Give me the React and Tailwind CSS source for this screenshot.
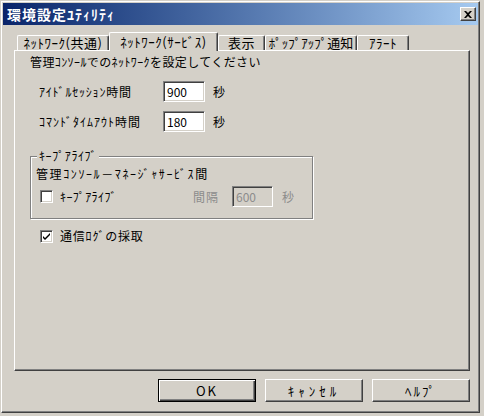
import React from 'react';

const font = "font-['Noto_Sans_CJK_JP','Noto_Sans',sans-serif]";
const raised = 'border border-t-white border-l-white border-r-[#404040] border-b-[#404040] shadow-[inset_-1px_-1px_0_#808080]';
const sunken = 'border border-t-[#808080] border-l-[#808080] border-r-white border-b-white shadow-[inset_1px_1px_0_#404040,inset_-1px_-1px_0_#d4d0c8]';

const Tab = ({ label, width, active, tight }) => (
  <div
    className={`${width} flex items-center justify-center border-l border-t border-r border-l-white border-t-white border-r-[#404040] shadow-[inset_-1px_0_0_#808080] rounded-t-[2px] bg-[#d4d0c8] text-[13px] whitespace-nowrap ${
      tight ? '' : 'tracking-[0.5px]'
    } ${active ? 'h-[19px] relative z-10 -mb-px' : 'h-[15px]'}`}
  >
    {label}
  </div>
);

const TextBox = ({ value, disabled, width = 'w-[42px]' }) => (
  <div className={`${width} h-[21px] ${sunken} ${disabled ? 'bg-[#d4d0c8] text-[#8c8c8c]' : 'bg-white'} flex items-center pl-[3px]`}>
    {value}
  </div>
);

const Check = ({ checked }) => (
  <div className={`w-[13px] h-[13px] ${sunken} bg-white flex items-center justify-center`}>
    {checked && (
      <svg width="7" height="7" viewBox="0 0 7 7">
        <path d="M0 3 L2 5 L7 0 L7 2 L2 7 L0 5 Z" fill="black" />
      </svg>
    )}
  </div>
);

const Button = ({ label, isDefault, spacing }) => (
  <div
    className={`w-[98px] h-[23px] flex items-center justify-center text-[13px] ${spacing} ${
      isDefault
        ? 'border border-black shadow-[inset_1px_1px_0_white,inset_-1px_-1px_0_#404040,inset_-2px_-2px_0_#808080]'
        : raised
    }`}
  >
    {label}
  </div>
);

export default function App() {
  return (
    <div className={`w-[484px] h-[416px] bg-[#d4d0c8] pt-px pl-px text-[12px] leading-[14px] text-black ${font}`}>
      <div className={`w-[479px] h-[412px] ${raised} p-px flex flex-col`}>
        <div className="h-[22px] bg-gradient-to-r from-[#0a246a] to-[#a6caf0] flex items-center justify-between pl-[4px] pr-[2px]">
          <span className="text-white font-bold text-[14px] tracking-[1px]">環境設定ﾕﾃｨﾘﾃｨ</span>
          <div className={`w-[16px] h-[14px] bg-[#d4d0c8] ${raised} flex items-center justify-center`}>
            <svg width="8" height="7" viewBox="0 0 8 7">
              <path d="M0 0 L2 0 L4 2 L6 0 L8 0 L5 3.5 L8 7 L6 7 L4 5 L2 7 L0 7 L3 3.5 Z" fill="black" />
            </svg>
          </div>
        </div>

        <div className="ml-[11px] w-[456px] mt-[7px] flex flex-col">
          <div className="flex items-end pl-[3px] h-[18px]">
            <Tab label="ﾈｯﾄﾜｰｸ(共通)" width="w-[92px]" />
            <Tab label="ﾈｯﾄﾜｰｸ(ｻｰﾋﾞｽ)" width="w-[109px]" active />
            <Tab label="表示" width="w-[47px]" />
            <Tab label="ﾎﾟｯﾌﾟｱｯﾌﾟ通知" width="w-[92px]" tight />
            <Tab label="ｱﾗｰﾄ" width="w-[52px]" />
          </div>

          <div className={`h-[321px] ${raised} flex flex-col`}>
            <div className="mt-[4px] pl-[15px] tracking-[0.4px]">管理ｺﾝｿｰﾙでのﾈｯﾄﾜｰｸを設定してください</div>

            <div className="mt-[12px] pl-[24px] flex items-center h-[21px]">
              <span className="w-[124px] tracking-[0.8px]">ｱｲﾄﾞﾙｾｯｼｮﾝ時間</span>
              <TextBox value="900" />
              <span className="ml-[8px]">秒</span>
            </div>
            <div className="mt-[9px] pl-[24px] flex items-center h-[21px]">
              <span className="w-[124px] tracking-[1px]">ｺﾏﾝﾄﾞﾀｲﾑｱｳﾄ時間</span>
              <TextBox value="180" />
              <span className="ml-[8px]">秒</span>
            </div>

            <fieldset className="mt-[17px] ml-[15px] w-[283px] border border-[#808080] shadow-[1px_1px_0_white,inset_1px_1px_0_white] pb-[11px]">
              <legend className="ml-[6px] px-[2px] bg-[#d4d0c8] tracking-[0.6px]">ｷｰﾌﾟｱﾗｲﾌﾞ</legend>
              <div className="mt-[4px] pl-[5px] tracking-[1.6px]">管理ｺﾝｿｰﾙ－ﾏﾈｰｼﾞｬｻｰﾋﾞｽ間</div>
              <div className="mt-[5px] pl-[9px] flex items-center h-[21px]">
                <div className="w-[153px] flex items-center">
                  <Check />
                  <span className="ml-[7px] tracking-[0.4px]">ｷｰﾌﾟｱﾗｲﾌﾞ</span>
                </div>
                <span className="w-[39px] text-[#8c8c8c] tracking-[1px]">間隔</span>
                <TextBox value="600" disabled width="w-[41px]" />
                <span className="ml-[9px] text-[#8c8c8c]">秒</span>
              </div>
            </fieldset>

            <div className="mt-[10px] pl-[25px] flex items-center">
              <Check checked />
              <span className="ml-[7px] tracking-[0.8px]">通信ﾛｸﾞの採取</span>
            </div>
          </div>

          <div className="mt-[8px] flex justify-end gap-[9px]">
            <Button label="OK" isDefault spacing="tracking-[2px]" />
            <Button label="ｷｬﾝｾﾙ" spacing="tracking-[4px]" />
            <Button label="ﾍﾙﾌﾟ" spacing="tracking-[2px]" />
          </div>
        </div>
      </div>
    </div>
  );
}
